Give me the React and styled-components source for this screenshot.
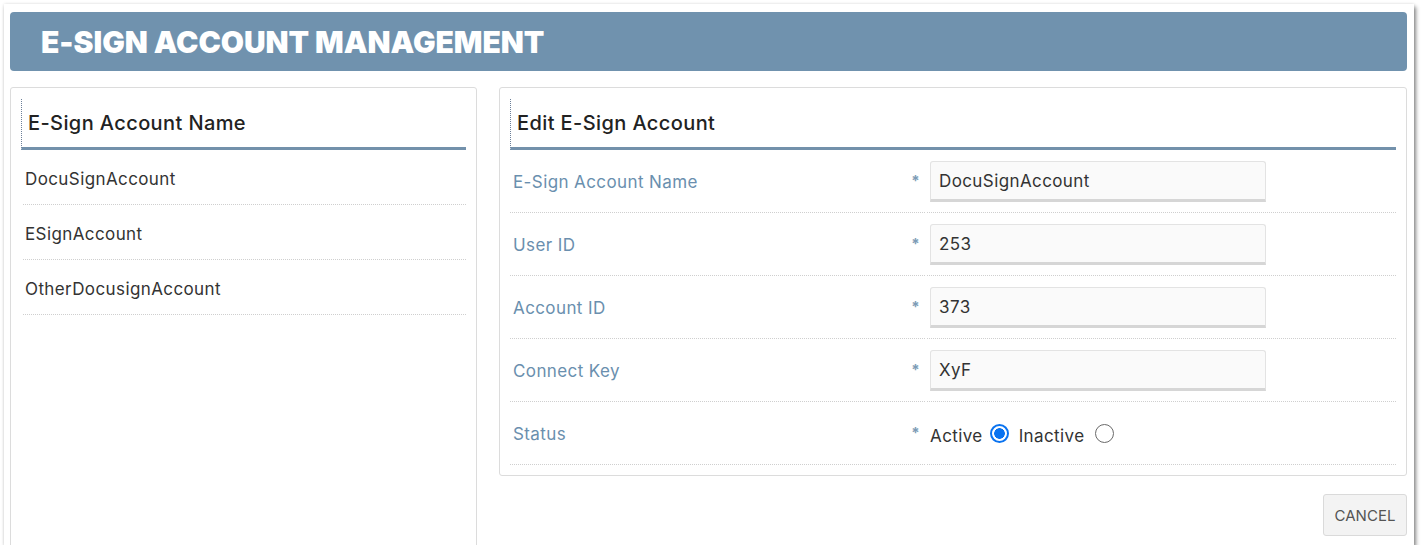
import React, { useState } from 'react';
import styled, { createGlobalStyle } from 'styled-components';

const GlobalStyle = createGlobalStyle`
  html, body {
    margin: 0;
    padding: 0;
    background: #ffffff;
    font-family: Inter, "Noto Sans", "Liberation Sans", sans-serif;
    color: #333;
  }
  * { box-sizing: border-box; }
`;

const Frame = styled.div`
  margin: 4px 0 0 4px;
  width: 1410px;
  height: 541px;
  background: #fff;
  overflow: hidden;
  display: flex;
  flex-direction: column;
  padding: 8px 7px 0 6px;
  box-shadow: 2px 3px 4px rgba(0, 0, 0, 0.45), 0 0 3px rgba(0, 0, 0, 0.12);
`;

const Banner = styled.header`
  height: 59px;
  flex: 0 0 59px;
  background: #7092ae;
  border-radius: 4px;
  display: flex;
  align-items: center;
  padding-left: 31px;

  h1 {
    margin: 0;
    color: #fff;
    font-family: Inter, "Noto Sans", sans-serif;
    font-weight: 900;
    font-size: 30px;
    letter-spacing: -0.05px;
  }
`;

const Content = styled.div`
  flex: 1;
  display: flex;
  gap: 22px;
  margin-top: 16px;
  min-height: 0;
`;

const Panel = styled.section`
  border: 1px solid #dcdcdc;
  border-radius: 3px;
  background: #fff;
  padding: 11px 10px 10px 10px;
`;

const ListPanel = styled(Panel)`
  flex: 0 0 467px;
  margin-bottom: -8px;
`;

const RightColumn = styled.div`
  flex: 1;
  display: flex;
  flex-direction: column;
`;

const PanelTitle = styled.h2`
  margin: 0;
  height: 51px;
  border-left: 1px dotted #6c7f98;
  border-bottom: 3px solid #7391ab;
  padding: 0 0 1px 6px;
  display: flex;
  align-items: center;
  font-size: 20px;
  font-weight: 500;
  letter-spacing: 0.4px;
  color: #222;
`;

const ListItem = styled.div`
  height: 55px;
  margin: 0 0 0 2px;
  padding: 4px 0 0 2px;
  display: flex;
  align-items: center;
  border-bottom: 1px dotted #cfcfcf;
  font-size: 17px;
  letter-spacing: 0.4px;
  color: #333;
  cursor: pointer;
`;

const FormGrid = styled.div`
  display: grid;
  grid-template-columns: 1fr 469px;
  column-gap: 2px;
`;

const LabelCell = styled.div`
  height: 63px;
  border-bottom: 1px dotted #cfcfcf;
  display: flex;
  align-items: center;
  justify-content: space-between;
  padding: 2px 5px 0 3px;
  font-size: 17px;
  letter-spacing: 0.4px;
  color: #6a8fae;
`;

const Required = styled.span`
  color: #7d9cb6;
  font-size: 15px;
  font-weight: 700;
  margin-top: -4px;
`;

const ValueCell = styled.div`
  height: 63px;
  border-bottom: 1px dotted #cfcfcf;
  display: flex;
  align-items: center;
  padding-left: 3px;
  font-size: 17px;
  letter-spacing: 0.4px;
  color: #333;
`;

const TextInput = styled.input`
  width: 336px;
  height: 41px;
  border: 1px solid #e3e3e3;
  border-bottom: 3px solid #d6d6d6;
  border-radius: 3px 3px 0 0;
  background: #fafafa;
  padding: 2px 8px 0;
  font-family: inherit;
  font-size: 17px;
  letter-spacing: 0.4px;
  color: #333;
  outline: none;
`;

const RadioLabel = styled.label`
  display: inline-flex;
  align-items: center;
  margin-right: 10px;
  padding-top: 6px;
  cursor: pointer;
`;

const Radio = styled.input`
  appearance: none;
  margin: -6px 0 0 ${p => p.$gap}px;
  width: 19px;
  height: 19px;
  border-radius: 50%;
  border: 1.5px solid #6a6a6a;
  background: #fff;
  cursor: pointer;

  &:checked {
    border: 2px solid #0a73f0;
    background: radial-gradient(circle, #0a73f0 0 5px, #fff 5.6px);
  }
`;

const Actions = styled.div`
  display: flex;
  justify-content: flex-end;
  margin-top: 18px;
`;

const Button = styled.button`
  width: 84px;
  height: 42px;
  border: 1px solid #dadada;
  border-radius: 3px;
  background: #f3f3f3;
  font-family: inherit;
  font-size: 15px;
  color: #555;
  text-transform: uppercase;
  cursor: pointer;
`;

const accounts = ['DocuSignAccount', 'ESignAccount', 'OtherDocusignAccount'];

const fields = [
  { label: 'E-Sign Account Name', value: 'DocuSignAccount' },
  { label: 'User ID', value: '253' },
  { label: 'Account ID', value: '373' },
  { label: 'Connect Key', value: 'XyF' },
];

export default function App() {
  const [status, setStatus] = useState('active');

  return (
    <>
      <GlobalStyle />
      <Frame>
        <Banner>
          <h1>E-SIGN ACCOUNT MANAGEMENT</h1>
        </Banner>
        <Content>
          <ListPanel>
            <PanelTitle>E-Sign Account Name</PanelTitle>
            {accounts.map(name => (
              <ListItem key={name}>{name}</ListItem>
            ))}
          </ListPanel>
          <RightColumn>
            <Panel>
              <PanelTitle>Edit E-Sign Account</PanelTitle>
              <FormGrid>
                {fields.map(f => (
                  <React.Fragment key={f.label}>
                    <LabelCell>
                      {f.label}
                      <Required>*</Required>
                    </LabelCell>
                    <ValueCell>
                      <TextInput defaultValue={f.value} />
                    </ValueCell>
                  </React.Fragment>
                ))}
                <LabelCell>
                  Status
                  <Required>*</Required>
                </LabelCell>
                <ValueCell>
                  <RadioLabel>
                    Active
                    <Radio
                      type="radio"
                      name="status"
                      $gap={7}
                      checked={status === 'active'}
                      onChange={() => setStatus('active')}
                    />
                  </RadioLabel>
                  <RadioLabel>
                    Inactive
                    <Radio
                      type="radio"
                      name="status"
                      $gap={10}
                      checked={status === 'inactive'}
                      onChange={() => setStatus('inactive')}
                    />
                  </RadioLabel>
                </ValueCell>
              </FormGrid>
            </Panel>
            <Actions>
              <Button>Cancel</Button>
            </Actions>
          </RightColumn>
        </Content>
      </Frame>
    </>
  );
}
